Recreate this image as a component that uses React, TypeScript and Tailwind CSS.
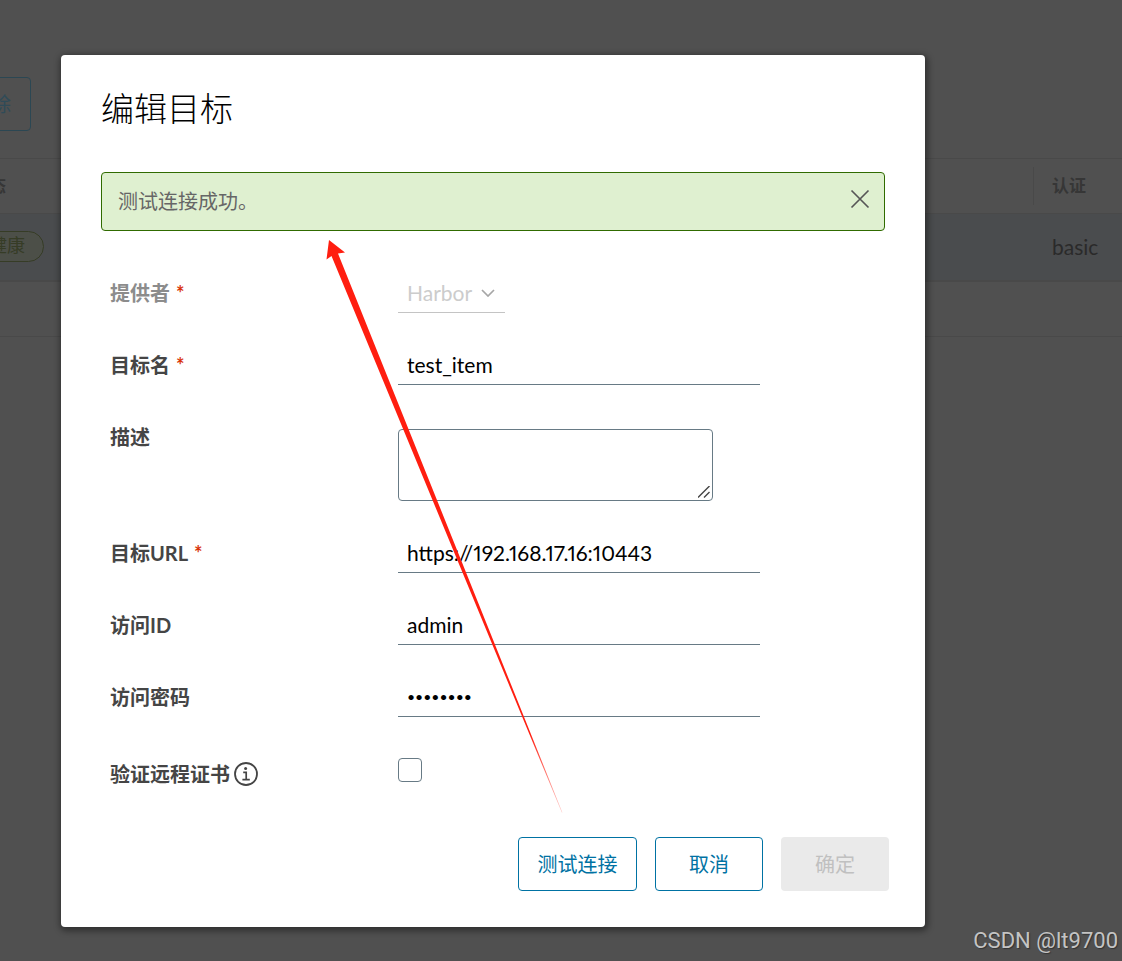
import type { ReactNode } from 'react';

const fieldClass =
  'h-9 w-[362px] max-w-full border-b border-[#677a85] bg-transparent px-[9px] pb-1 text-black proportional-nums outline-none';

function InfoIcon() {
  return (
    <svg viewBox="0 0 24 24" className="h-6 w-6 shrink-0" fill="none" stroke="#454545" aria-hidden="true">
      <circle cx="12" cy="12" r="11" strokeWidth="1.8" />
      <circle cx="11.6" cy="6.6" r="1.5" fill="#454545" stroke="none" />
      <path d="M9.2 10.4h3v7M8.4 17.6h7.4" strokeWidth="1.7" />
    </svg>
  );
}

type RowProps = {
  id: string;
  label: string;
  required?: boolean;
  muted?: boolean;
  children: ReactNode;
};

function Row({ id, label, required, muted, children }: RowProps) {
  return (
    <div className="flex items-start">
      <label
        htmlFor={id}
        className={`w-[288px] shrink-0 text-[20px] leading-8 font-bold ${muted ? 'text-[#8c8c8c]' : 'text-[#454545]'}`}
      >
        {label}
        {required && <span className="ml-1.5 text-[#d9350b]">*</span>}
      </label>
      {children}
    </div>
  );
}

/* Endpoint list that stays visible, dimmed, behind the dialog */
function DimmedPage() {
  return (
    <div className="pt-[77px]" aria-hidden="true">
      <div className="flex w-[31px] justify-end">
        <button
          type="button"
          tabIndex={-1}
          className="h-[54px] w-[108px] shrink-0 rounded border border-[#2b4753] pr-[19px] text-right text-[20px] text-[#2f4b58]"
        >
          删除
        </button>
      </div>
      <table className="mt-[27px] w-full table-fixed border-collapse">
        <thead>
          <tr className="h-[55px] border-y border-[#494949] text-[17px] text-[#363636]">
            <th className="w-[60px] p-0">
              <div className="flex w-[6px] justify-end whitespace-nowrap">状态</div>
            </th>
            <th className="p-0" />
            <th className="w-[89px] p-0 text-left">
              <div className="border-l border-[#494949] pl-[18px] leading-[38px]">认证</div>
            </th>
          </tr>
        </thead>
        <tbody>
          <tr className="h-[67px] border-b-2 border-[#494949] bg-[#4a4c4e]">
            <td className="p-0">
              <div className="flex w-[44px] justify-end">
                <span className="h-[31px] shrink-0 rounded-full border border-[#363c26] bg-[#4c4f48] px-[18px] text-[18px] leading-[26px] whitespace-nowrap text-[#363c26]">
                  健康
                </span>
              </div>
            </td>
            <td className="p-0" />
            <td className="p-0 pl-[19px] text-[21px] leading-7 text-[#2a2a2a]">basic</td>
          </tr>
          <tr className="h-14 border-b border-[#494949]">
            <td colSpan={3} />
          </tr>
        </tbody>
      </table>
    </div>
  );
}

/* Red pointer from the test button up to the alert */
function Arrow() {
  return (
    <svg
      viewBox="0 0 240 576"
      className="pointer-events-none absolute top-[183px] left-[263px] h-[576px] w-[240px]"
      aria-hidden="true"
    >
      <defs>
        <linearGradient id="arrow-fade" x1="0" y1="0" x2="0" y2="576" gradientUnits="userSpaceOnUse">
          <stop offset="0" stopColor="#ff1e10" />
          <stop offset="0.86" stopColor="#ff1e10" />
          <stop offset="1" stopColor="#ff1e10" stopOpacity="0.2" />
        </linearGradient>
      </defs>
      <path d="M5 2 L21 14.5 L14 15.5 L238.4 574.5 L237.8 574.5 L7.5 18 L2.5 21.5 Z" fill="url(#arrow-fade)" />
    </svg>
  );
}

export default function App() {
  return (
    <div className="relative min-h-screen overflow-hidden bg-[#505050] font-['Lato','Noto_Sans_CJK_SC',sans-serif]">
      <DimmedPage />

      <div className="absolute inset-0 px-[61px] pt-[55px]">
        <div
          role="dialog"
          aria-labelledby="dialog-title"
          className="relative max-w-[864px] rounded bg-white px-10 pt-8 pb-9 shadow-[1px_2px_6px_2px_rgba(0,0,0,0.4)]"
        >
          <h1 id="dialog-title" className="text-[33px] leading-[42px] font-light text-black">
            编辑目标
          </h1>

          <div
            role="alert"
            className="mt-[43px] flex h-[59px] items-center justify-between rounded border border-[#306b00] bg-[#dff0d0] pr-3 pb-0.5 pl-4"
          >
            <span className="text-[20px] text-[#666666]">测试连接成功。</span>
            <button type="button" aria-label="关闭" className="pb-1">
              <svg viewBox="0 0 24 24" className="h-6 w-6" fill="none" stroke="#565656" strokeWidth="1.7">
                <path d="M3.5 3.5l17 17M20.5 3.5l-17 17" />
              </svg>
            </button>
          </div>

          <form className="mt-[46px]">
            <div className="flex flex-col gap-9 pl-[9px]">
              <Row id="provider" label="提供者" required muted>
                <div className="relative">
                  <select
                    id="provider"
                    disabled
                    className="h-9 w-[107px] appearance-none border-b border-[#c4c4c4] bg-transparent pb-1 pl-[9px] text-[21px] text-[#cccccc] opacity-100"
                  >
                    <option>Harbor</option>
                  </select>
                  <svg
                    viewBox="0 0 14 8"
                    className="pointer-events-none absolute top-3 right-[10px] h-2 w-[14px]"
                    fill="none"
                    stroke="#a6a6a6"
                    strokeWidth="1.7"
                  >
                    <path d="M1 1l6 6 6-6" />
                  </svg>
                </div>
              </Row>
              <Row id="name" label="目标名" required>
                <input id="name" type="text" defaultValue="test_item" className={`${fieldClass} text-[21px]`} />
              </Row>
              <Row id="description" label="描述">
                <div className="relative mt-2">
                  <textarea
                    id="description"
                    className="block h-[72px] w-[315px] resize-none rounded border border-[#677a85] bg-transparent px-2 text-[21px] outline-none"
                  />
                  <svg
                    viewBox="0 0 12 12"
                    className="pointer-events-none absolute right-[3px] bottom-[3px] h-3 w-3"
                    fill="none"
                    stroke="#454545"
                    strokeWidth="1.4"
                  >
                    <path d="M0 11.5L11.5 0M6 11.5L11.5 6" />
                  </svg>
                </div>
              </Row>
              <Row id="url" label="目标URL" required>
                <input
                  id="url"
                  type="text"
                  defaultValue="https://192.168.17.16:10443"
                  className={`${fieldClass} text-[21px]`}
                />
              </Row>
              <Row id="access-id" label="访问ID">
                <input id="access-id" type="text" defaultValue="admin" className={`${fieldClass} text-[21px]`} />
              </Row>
              <Row id="secret" label="访问密码">
                <input id="secret" type="password" defaultValue="password" className={`${fieldClass} text-[14px]`} />
              </Row>
              <div className="flex items-start">
                <label
                  htmlFor="verify"
                  className="flex w-[288px] shrink-0 items-center gap-1 text-[20px] leading-[42px] font-bold text-[#454545]"
                >
                  验证远程证书
                  <InfoIcon />
                </label>
                <input
                  id="verify"
                  type="checkbox"
                  className="mt-[5px] h-6 w-6 appearance-none rounded border border-[#677a85] bg-white"
                />
              </div>
            </div>

            <div className="-mr-1 mt-[42px] flex justify-end gap-[18px] text-[20px]">
              <button type="button" className="h-[54px] w-[119px] rounded border border-[#0072a3] text-[#0072a3]">
                测试连接
              </button>
              <button type="button" className="h-[54px] w-[108px] rounded border border-[#0072a3] text-[#0072a3]">
                取消
              </button>
              <button type="submit" disabled className="h-[54px] w-[108px] rounded bg-[#eaeaea] text-[#c0c0c0]">
                确定
              </button>
            </div>
          </form>

          <Arrow />
        </div>
      </div>

      <span className="absolute right-1 bottom-1 font-['Roboto',sans-serif] text-[22px] text-[#c4c4c4] [text-shadow:1px_1px_1px_#333333]">
        CSDN @lt9700
      </span>
    </div>
  );
}
